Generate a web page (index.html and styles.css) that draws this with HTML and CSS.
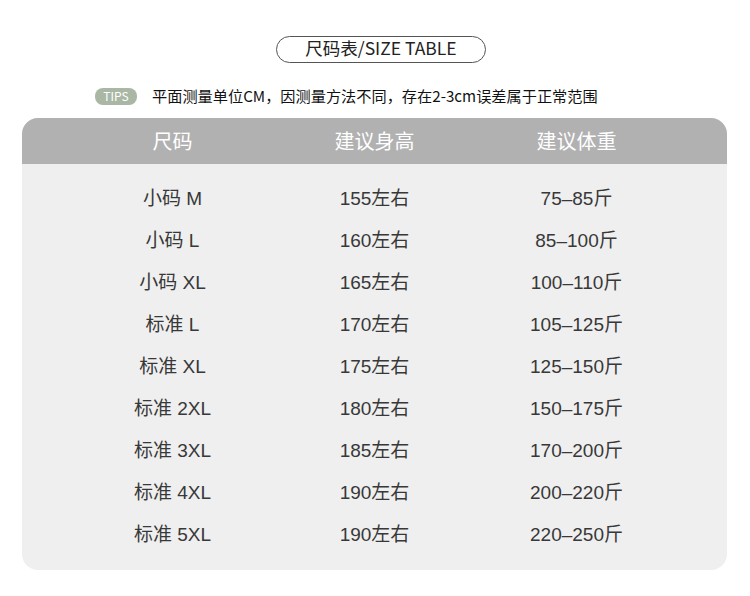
FILE: index.html
```html
<!DOCTYPE html>
<html lang="zh">
<head>
<meta charset="utf-8">
<link rel="stylesheet" href="styles.css">
</head>
<body>
<div class="page">
  <div class="title-wrap"><div class="title">尺码表/SIZE TABLE</div></div>
  <div class="tips"><span class="badge">TIPS</span><span class="tips-text">平面测量单位CM，因测量方法不同，存在2-3cm误差属于正常范围</span></div>
  <div class="card">
    <div class="head row">
      <div>尺码</div><div>建议身高</div><div>建议体重</div>
    </div>
    <div class="body">
      <div class="row"><div>小码 M</div><div>155左右</div><div>75–85斤</div></div>
      <div class="row"><div>小码 L</div><div>160左右</div><div>85–100斤</div></div>
      <div class="row"><div>小码 XL</div><div>165左右</div><div>100–110斤</div></div>
      <div class="row"><div>标准 L</div><div>170左右</div><div>105–125斤</div></div>
      <div class="row"><div>标准 XL</div><div>175左右</div><div>125–150斤</div></div>
      <div class="row"><div>标准 2XL</div><div>180左右</div><div>150–175斤</div></div>
      <div class="row"><div>标准 3XL</div><div>185左右</div><div>170–200斤</div></div>
      <div class="row"><div>标准 4XL</div><div>190左右</div><div>200–220斤</div></div>
      <div class="row"><div>标准 5XL</div><div>190左右</div><div>220–250斤</div></div>
    </div>
  </div>
</div>
</body>
</html>
```
FILE: styles.css
```css
* { box-sizing: border-box; }
html, body { margin: 0; padding: 0; background: #fff; }
body { font-family: "Liberation Sans", "Noto Sans CJK SC", sans-serif; color: #333; }
.page { width: 750px; height: 596px; padding: 36px 22px 0 22px; }
.title-wrap { display: flex; justify-content: center; padding-left: 12px; }
.title {
  width: 210px; height: 27px; border: 1px solid #555; border-radius: 14px;
  display: flex; align-items: center; justify-content: center; padding-bottom: 3px;
  font-family: "Noto Sans CJK SC", sans-serif; font-size: 17.5px; color: #222; line-height: 1;
}
.tips { display: flex; align-items: center; margin-top: 25px; padding-left: 73px; height: 16px; }
.badge {
  background: #a9b7a4; color: #fff; font-size: 12px; border-radius: 8px;
  width: 42px; height: 17px; display: flex; align-items: center; justify-content: center;
  font-family: "Noto Sans CJK SC", sans-serif; line-height: 1;
}
.tips-text { margin-left: 15px; margin-top: -1px; font-family: "Noto Sans CJK SC", sans-serif; font-size: 15.2px; color: #111; line-height: 1; }
.card { margin-top: 14px; background: #efefef; border-radius: 16px; overflow: hidden; width: 705px; }
.row { display: grid; grid-template-columns: repeat(3, 202px); justify-content: center; text-align: center; }
.head { background: #b1b1b1; height: 46px; align-items: center; color: #fff; font-size: 20px; font-family: "Noto Sans CJK SC", sans-serif; padding-bottom: 2px; }
.body { padding: 11px 0 17px; }
.body .row { height: 42px; align-items: center; font-size: 19px; color: #383838; }
```
